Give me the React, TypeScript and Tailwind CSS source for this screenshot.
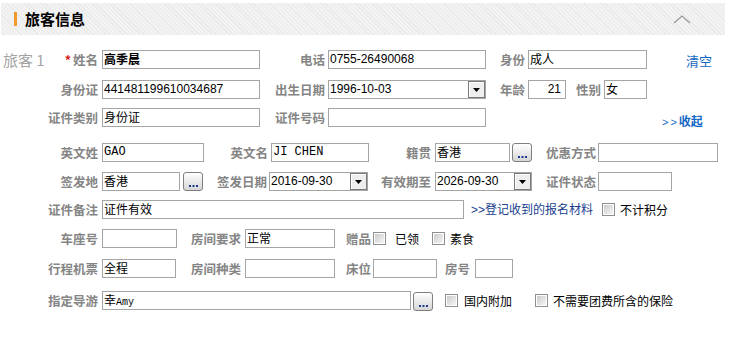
import React from 'react';

const lbl = 'shrink-0 text-right text-[12.5px] font-bold text-[#858585] leading-[19px] whitespace-nowrap';
const box = 'shrink-0 h-[19px] border border-[#a5a5a5] bg-white overflow-hidden pl-[1px] text-[12px] leading-[16px] text-black whitespace-nowrap';
const num = "font-['Liberation_Sans'] text-[11px]";
const mono = "font-['Liberation_Mono'] text-[10px]";

function Dots() {
  return (
    <button className="shrink-0 h-[19px] w-[20px] rounded-[3px] border border-[#7f7f7f] bg-gradient-to-b from-white to-[#d6d6d6] flex items-end justify-center pb-[3px]">
      <svg width="9" height="2" viewBox="0 0 9 2">
        <rect x="0" y="0" width="2" height="2" fill="#1d3b8c" />
        <rect x="3.5" y="0" width="2" height="2" fill="#1d3b8c" />
        <rect x="7" y="0" width="2" height="2" fill="#1d3b8c" />
      </svg>
    </button>
  );
}

function Drop() {
  return (
    <span className="shrink-0 h-[17px] w-[17px] border border-[#7a7a7a] bg-[#eeeeee] flex items-center justify-center shadow-[inset_1px_1px_0_#ffffff]">
      <svg width="7" height="4" viewBox="0 0 7 4">
        <path d="M0 0h7L3.5 4z" fill="#000" />
      </svg>
    </span>
  );
}

function Check() {
  return (
    <span className="shrink-0 h-[13px] w-[13px] border border-[#8f8f8f] bg-white p-[1px] flex">
      <span className="flex-1 bg-gradient-to-br from-[#cbcbcb] to-[#f6f6f6]" />
    </span>
  );
}

export default function App() {
  return (
    <div className="w-[729px] h-[347px] bg-white font-['Noto_Sans_CJK_SC',sans-serif] overflow-hidden">
      {/* header */}
      <div className="mt-[3px] ml-[1px] w-[724px] h-[32px] flex items-center justify-between bg-[repeating-linear-gradient(45deg,#f3f3f3_0px,#f3f3f3_2px,#e9e9e9_2px,#e9e9e9_3px)]">
        <div className="flex items-center">
          <span className="ml-[13px] h-[14px] w-[3px] bg-[#f39a2d]" />
          <span className="ml-[8px] text-[15px] font-bold text-black leading-[20px]">旅客信息</span>
        </div>
        <svg className="mr-[34px]" width="18" height="9" viewBox="0 0 18 9">
          <polyline points="1,8 9,1 17,8" fill="none" stroke="#9a9a9a" strokeWidth="1.3" />
        </svg>
      </div>

      {/* row 1 */}
      <div className="mt-[15px] flex items-center h-[19px]">
        <div className="w-[98px] shrink-0 flex items-center justify-between">
          <span className="pl-[3px] text-[15px] text-[#a3a3a3] leading-[19px]">旅客 1</span>
          <span className={lbl}>
            <span className="text-[#e02020] mr-[2px]">*</span>姓名
          </span>
        </div>
        <div className={box + ' ml-[4px] w-[158px] font-bold text-[12.5px]'}>高季晨</div>
        <span className={lbl + ' w-[65px]'}>电话</span>
        <div className={box + ' ml-[3px] w-[158px] ' + num}>0755-26490068</div>
        <span className={lbl + ' w-[39px]'}>身份</span>
        <div className={box + ' ml-[3px] w-[119px]'}>成人</div>
        <span className="ml-[39px] text-[13px] text-[#1467c4] leading-[19px] mt-[2px]">清空</span>
      </div>

      {/* row 2 */}
      <div className="mt-[11px] flex items-center h-[19px]">
        <span className={lbl + ' w-[98px]'}>身份证</span>
        <div className={box + ' ml-[4px] w-[158px] ' + num}>441481199610034687</div>
        <span className={lbl + ' w-[65px]'}>出生日期</span>
        <div className={box + ' ml-[3px] w-[158px] flex items-center justify-between pr-0 ' + num}>
          <span className="self-start">1996-10-03</span>
          <Drop />
        </div>
        <span className={lbl + ' w-[39px]'}>年龄</span>
        <div className={box + ' ml-[3px] w-[38px] text-right pr-[4px] ' + num}>21</div>
        <span className={lbl + ' w-[35px]'}>性别</span>
        <div className={box + ' ml-[3px] w-[43px]'}>女</div>
      </div>

      {/* row 3 */}
      <div className="mt-[9px] flex items-center h-[19px]">
        <span className={lbl + ' w-[98px]'}>证件类别</span>
        <div className={box + ' ml-[4px] w-[158px]'}>身份证</div>
        <span className={lbl + ' w-[65px]'}>证件号码</span>
        <div className={box + ' ml-[3px] w-[158px]'}></div>
        <span className="ml-[176px] mt-[8px] text-[12px] font-bold text-[#1467c4] leading-[19px]">
          <span className="font-['Liberation_Sans'] font-normal text-[11px] tracking-[2px]">&gt;&gt;</span>收起
        </span>
      </div>

      {/* row 4 */}
      <div className="mt-[16px] flex items-center h-[19px]">
        <span className={lbl + ' w-[98px]'}>英文姓</span>
        <div className={box + ' ml-[4px] w-[102px] ' + mono}>GAO</div>
        <span className={lbl + ' w-[64px]'}>英文名</span>
        <div className={box + ' ml-[3px] w-[98px] ' + mono}>JI CHEN</div>
        <span className={lbl + ' w-[62px]'}>籍贯</span>
        <div className={box + ' ml-[4px] w-[75px]'}>香港</div>
        <div className="ml-[2px]">
          <Dots />
        </div>
        <span className={lbl + ' w-[64px]'}>优惠方式</span>
        <div className={box + ' ml-[2px] w-[120px]'}></div>
      </div>

      {/* row 5 */}
      <div className="mt-[10px] flex items-center h-[19px]">
        <span className={lbl + ' w-[98px]'}>签发地</span>
        <div className={box + ' ml-[4px] w-[78px]'}>香港</div>
        <div className="ml-[3px]">
          <Dots />
        </div>
        <span className={lbl + ' w-[64px]'}>签发日期</span>
        <div className={box + ' ml-[2px] w-[99px] flex items-center justify-between ' + num}>
          <span className="self-start">2016-09-30</span>
          <Drop />
        </div>
        <span className={lbl + ' w-[63px]'}>有效期至</span>
        <div className={box + ' ml-[4px] w-[97px] flex items-center justify-between ' + num}>
          <span className="self-start">2026-09-30</span>
          <Drop />
        </div>
        <span className={lbl + ' w-[64px]'}>证件状态</span>
        <div className={box + ' ml-[2px] w-[74px]'}></div>
      </div>

      {/* row 6 */}
      <div className="mt-[9px] flex items-center h-[19px]">
        <span className={lbl + ' w-[98px]'}>证件备注</span>
        <div className={box + ' ml-[4px] w-[362px]'}>证件有效</div>
        <span className="ml-[7px] text-[12px] text-[#1c3f8f] leading-[19px]">
          <span className="font-['Liberation_Sans'] text-[12px]">&gt;&gt;</span>登记收到的报名材料
        </span>
        <span className="ml-[9px]">
          <Check />
        </span>
        <span className="ml-[5px] text-[12px] text-black leading-[19px]">不计积分</span>
      </div>

      {/* row 7 */}
      <div className="mt-[10px] flex items-center h-[19px]">
        <span className={lbl + ' w-[98px]'}>车座号</span>
        <div className={box + ' ml-[4px] w-[75px]'}></div>
        <span className={lbl + ' w-[64px]'}>房间要求</span>
        <div className={box + ' ml-[4px] w-[90px]'}>正常</div>
        <span className={lbl + ' w-[36px]'}>赠品</span>
        <span className="ml-[2px]">
          <Check />
        </span>
        <span className="ml-[9px] text-[12px] text-black leading-[19px]">已领</span>
        <span className="ml-[13px]">
          <Check />
        </span>
        <span className="ml-[5px] text-[12px] text-black leading-[19px]">素食</span>
      </div>

      {/* row 8 */}
      <div className="mt-[11px] flex items-center h-[19px]">
        <span className={lbl + ' w-[98px]'}>行程机票</span>
        <div className={box + ' ml-[4px] w-[74px]'}>全程</div>
        <span className={lbl + ' w-[65px]'}>房间种类</span>
        <div className={box + ' ml-[4px] w-[90px]'}></div>
        <span className={lbl + ' w-[36px]'}>床位</span>
        <div className={box + ' ml-[2px] w-[64px]'}></div>
        <span className={lbl + ' w-[33px]'}>房号</span>
        <div className={box + ' ml-[5px] w-[38px]'}></div>
      </div>

      {/* row 9 */}
      <div className="mt-[13px] flex items-center h-[19px]">
        <span className={lbl + ' w-[98px]'}>指定导游</span>
        <div className={box + ' ml-[4px] w-[309px]'}>
          幸<span className={mono}>Amy</span>
        </div>
        <div className="ml-[2px] mt-[2px]">
          <Dots />
        </div>
        <span className="ml-[12px]">
          <Check />
        </span>
        <span className="ml-[6px] text-[12px] text-black leading-[19px]">国内附加</span>
        <span className="ml-[23px]">
          <Check />
        </span>
        <span className="ml-[5px] text-[12px] text-black leading-[19px]">不需要团费所含的保险</span>
      </div>
    </div>
  );
}
